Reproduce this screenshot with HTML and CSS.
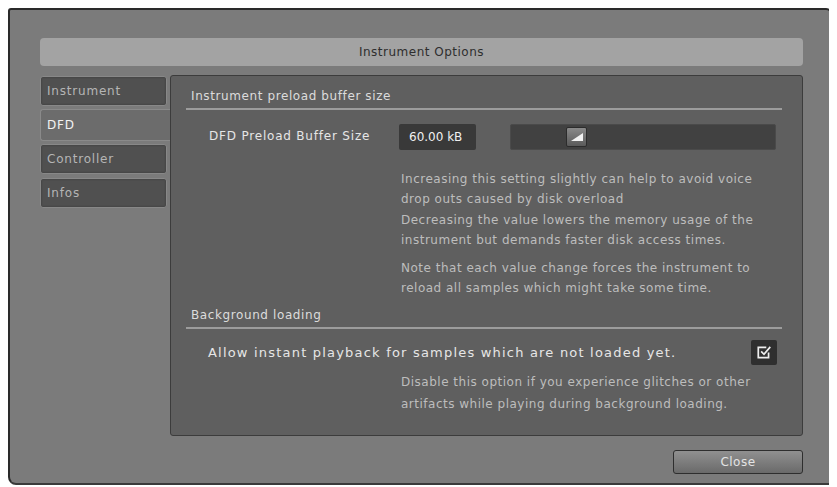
FILE: index.html
```html
<!DOCTYPE html>
<html lang="en">

<head>
  <meta charset="UTF-8">
  <meta name="viewport" content="width=device-width, initial-scale=1.0">
  <title>Instrument Options</title>
  <link rel="stylesheet" href="styles.css">
</head>

<body>
  <div class="dialog">
    <div class="titlebar">Instrument Options</div>

    <div class="main">
      <ul class="tabs">
        <li class="tab">Instrument</li>
        <li class="tab active">DFD</li>
        <li class="tab">Controller</li>
        <li class="tab">Infos</li>
      </ul>

      <div class="panel">
        <div class="section-title">Instrument preload buffer size</div>

        <div class="row">
          <span class="label">DFD Preload Buffer Size</span>
          <span class="value">60.00 kB</span>
          <div class="slider">
            <span class="handle">
              <svg width="12" height="8" viewBox="0 0 12 8">
                <path d="M0 8 L12 0 L12 8 Z" fill="#f2f2f2" />
              </svg>
            </span>
          </div>
        </div>

        <div class="desc">
          <p>Increasing this setting slightly can help to avoid voice<br>drop outs caused by disk overload<br>Decreasing the value lowers the memory usage of the<br>instrument but demands faster disk access times.</p>
          <p>Note that each value change forces the instrument to<br>reload all samples which might take some time.</p>
        </div>

        <div class="section-title">Background loading</div>

        <div class="row check-row">
          <span class="check-label">Allow instant playback for samples which are not loaded yet.</span>
          <span class="checkbox">
            <svg width="16" height="16" viewBox="0 0 14 14">
              <path d="M11 7.5 V12 H2 V3 H9" fill="none" stroke="#eee" stroke-width="1.5" />
              <path d="M4.5 6.5 L7 9 L12.5 2.5" fill="none" stroke="#eee" stroke-width="1.5" />
            </svg>
          </span>
        </div>

        <div class="desc small">
          <p>Disable this option if you experience glitches or other<br>artifacts while playing during background loading.</p>
        </div>
      </div>
    </div>

    <div class="footer">
      <button class="close">Close</button>
    </div>
  </div>
</body>

</html>
```

FILE: styles.css
```css
body {
  margin: 8px;
  background-color: #fff;
  font-family: "DejaVu Sans", "Liberation Sans", sans-serif;
}

ul {
  padding: 0;
  margin: 0;
  list-style: none;
}

p {
  margin: 0;
}

.dialog {
  width: 824px;
  height: 477px;
  box-sizing: border-box;
  background-color: #7b7b7b;
  border: 2px solid #2a2a2a;
  border-bottom-color: #3a3a3a;
  border-radius: 3px 6px 3px 8px;
  padding: 28px 27px 0 30px;
}

.titlebar {
  height: 28px;
  line-height: 28px;
  text-align: center;
  background-color: #a3a3a3;
  border-radius: 4px;
  color: #2e2e2e;
  font-size: 12px;
  letter-spacing: 0.5px;
}

.main {
  display: flex;
  margin-top: 9px;
}

.tabs {
  width: 130px;
  padding-top: 1px;
}

.tab {
  width: 127px;
  height: 30px;
  box-sizing: border-box;
  margin-bottom: 4px;
  padding-left: 6px;
  line-height: 28px;
  font-size: 12px;
  letter-spacing: 0.8px;
  color: #b5b5b5;
  background-color: #505050;
  border: 1px solid #888;
  border-radius: 3px;
  box-shadow: inset 0 0 2px #333;
}

.tab.active {
  width: 130px;
  height: 32px;
  margin-top: -1px;
  margin-bottom: 3px;
  line-height: 30px;
  color: #f2f2f2;
  background-color: #6c6c6c;
  border: 1px solid #8a8a8a;
  border-right: none;
  border-radius: 3px 0 0 3px;
  box-shadow: none;
}

.panel {
  flex: 1;
  height: 361px;
  box-sizing: border-box;
  background-color: #5f5f5f;
  border: 1px solid #3c3c3c;
  border-radius: 3px;
  padding: 12px 20px 0 15px;
}

.section-title {
  padding: 0 0 3px 5px;
  border-bottom: 2px solid #9c9c9c;
  font-size: 12px;
  letter-spacing: 0.6px;
  line-height: 17px;
  color: #dcdcdc;
}

.row {
  display: flex;
  align-items: center;
  margin-top: 14px;
  padding-left: 23px;
}

.label {
  width: 190px;
  font-size: 12px;
  letter-spacing: 0.8px;
  color: #e6e6e6;
  align-self: flex-start;
  padding-top: 5px;
}

.value {
  width: 77px;
  height: 26px;
  box-sizing: border-box;
  padding-left: 10px;
  line-height: 26px;
  font-size: 12px;
  color: #f0f0f0;
  background-color: #393939;
  border-radius: 2px;
}

.slider {
  width: 266px;
  height: 26px;
  margin-left: 34px;
  box-sizing: border-box;
  background-color: #414141;
  border: 1px solid #4a4a4a;
  border-radius: 2px;
  padding: 2px 0 0 55px;
}

.handle {
  display: flex;
  align-items: center;
  justify-content: center;
  width: 21px;
  height: 20px;
  box-sizing: border-box;
  background: linear-gradient(#8a8a8a, #5a5a5a);
  border: 1px solid #2c2c2c;
  border-radius: 2px;
}

.desc {
  margin: 19px 0 0 215px;
  font-size: 12px;
  letter-spacing: 0.5px;
  line-height: 20.3px;
  color: #bdbdbd;
}

.desc p + p {
  margin-top: 8px;
}

.desc + .section-title {
  margin-top: 8px;
}

.check-row {
  justify-content: space-between;
  margin-top: 11px;
  padding-left: 22px;
  padding-right: 5px;
}

.check-label {
  font-size: 13px;
  letter-spacing: 1.2px;
  color: #e6e6e6;
}

.checkbox {
  display: flex;
  align-items: center;
  justify-content: center;
  width: 26px;
  height: 25px;
  background-color: #2f2f2f;
  border-radius: 2px;
}

.desc.small {
  margin-top: 6px;
  line-height: 22px;
}

.footer {
  display: flex;
  justify-content: flex-end;
  padding-top: 14px;
}

.close {
  width: 130px;
  height: 24px;
  font-family: inherit;
  font-size: 12px;
  letter-spacing: 0.5px;
  color: #e4e4e4;
  background: linear-gradient(#909090, #6a6a6a);
  border: 1px solid #2e2e2e;
  border-radius: 3px;
}
```
